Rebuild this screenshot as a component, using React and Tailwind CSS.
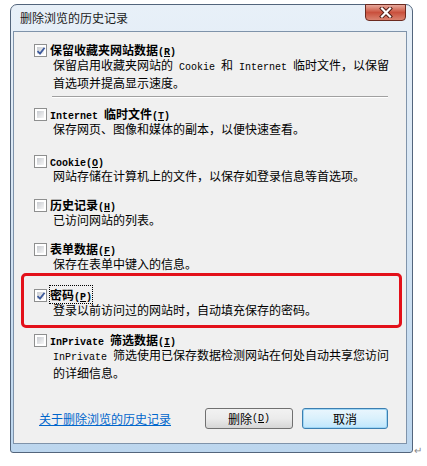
const L = ({ children }) => (
  <span className="font-['Liberation_Mono','Noto_Sans_CJK_SC',monospace] text-[10px]">{children}</span>
);

function Checkbox({ checked }) {
  return (
    <div className="relative w-[13px] h-[13px] mt-[1px] shrink-0 border border-[#8e8f8f] bg-white p-[2px]">
      <div className="w-full h-full bg-gradient-to-br from-[#c9ccd1] to-[#f6f6f6]" />
      {checked && (
        <svg className="absolute left-[1px] top-[1px]" width="10" height="10" viewBox="0 0 10 10">
          <path d="M1.5 5.2 L4 7.6 L8.6 1.8" fill="none" stroke="#3d5a9c" strokeWidth="1.8" />
        </svg>
      )}
    </div>
  );
}

function Item({ checked, title, lines, className = '', focus }) {
  return (
    <div className={`flex items-start ${className}`}>
      <Checkbox checked={checked} />
      <div className="ml-[3px] whitespace-nowrap">
        <div className="h-[14px] leading-[14px] font-bold">
          <span className={focus ? 'outline-1 outline-dotted outline-black' : ''}>{title}</span>
        </div>
        <div className={`pl-[3px] leading-[15px] ${focus ? 'mt-0' : ''}`}>
          {lines.map((ln, i) => <div key={i}>{ln}</div>)}
        </div>
      </div>
    </div>
  );
}

export default function App() {
  return (
    <div className="relative w-[427px] h-[466px] bg-white pt-[4px] pl-[10px] font-['Noto_Sans_CJK_SC',sans-serif] text-[12px] text-black">
      <div className="w-[403px] h-[449px] rounded-t-[7px] rounded-b-[3px] border border-[#53657c] bg-gradient-to-b from-[#e8f0f8] via-[#d4e4f3] to-[#bcd6ee] flex flex-col">
        {/* title bar */}
        <div className="h-[26px] flex items-start justify-between pl-[9px] pr-[6px]">
          <span className="mt-[5px] leading-[16px] text-[#1a1a1a]">删除浏览的历史记录</span>
          <div className="w-[41px] h-[17px] -mt-[1px] rounded-b-[4px] border border-[#6b2a20] bg-gradient-to-b from-[#e7a89b] via-[#c9503d] to-[#d9826f] flex items-center justify-center">
            <svg width="14" height="11" viewBox="0 0 14 11">
              <path d="M3 1.5 L11 9.5 M11 1.5 L3 9.5" stroke="#4b1a12" strokeWidth="4" strokeLinecap="square" />
              <path d="M3 1.5 L11 9.5 M11 1.5 L3 9.5" stroke="#ffffff" strokeWidth="2.2" strokeLinecap="square" />
            </svg>
          </div>
        </div>

        {/* client area */}
        <div className="relative flex-1 ml-[2px] mr-[5px] mb-[8px] border border-[#7f93aa] bg-[#f0f0f0] flex flex-col pl-[20px]">
          <Item
            className="mt-[11px]"
            checked
            title={<>保留收藏夹网站数据<L>(<u>R</u>)</L></>}
            lines={[
              <>保留启用收藏夹网站的<L> Cookie </L>和<L> Internet </L>临时文件，以保留</>,
              <>首选项并提高显示速度。</>,
            ]}
          />
          <div className="ml-[18px] mt-[6px] w-[336px] h-[2px] border-t border-[#a0a0a0] border-b border-b-white" />
          <Item
            className="mt-[9px]"
            title={<><L>Internet </L>临时文件<L>(<u>T</u>)</L></>}
            lines={[<>保存网页、图像和媒体的副本，以便快速查看。</>]}
          />
          <Item
            className="mt-[18px]"
            title={<L>Cookie(<u>O</u>)</L>}
            lines={[<>网站存储在计算机上的文件，以保存如登录信息等首选项。</>]}
          />
          <Item
            className="mt-[15px]"
            title={<>历史记录<L>(<u>H</u>)</L></>}
            lines={[<>已访问网站的列表。</>]}
          />
          <Item
            className="mt-[15px]"
            title={<>表单数据<L>(<u>F</u>)</L></>}
            lines={[<>保存在表单中键入的信息。</>]}
          />
          <Item
            className="mt-[17px]"
            checked
            focus
            title={<>密码<L>(<u>P</u>)</L></>}
            lines={[<>登录以前访问过的网站时，自动填充保存的密码。</>]}
          />
          <Item
            className="mt-[16px]"
            title={<><L>InPrivate </L>筛选数据<L>(<u>I</u>)</L></>}
            lines={[
              <><L>InPrivate </L>筛选使用已保存数据检测网站在何处自动共享您访问</>,
              <>的详细信息。</>,
            ]}
          />

          {/* bottom row */}
          <div className="mt-auto mb-[14px] -ml-[20px] pl-[25px] pr-[18px] flex items-center justify-between">
            <span className="text-[#0066cc] underline leading-[16px]">关于删除浏览的历史记录</span>
            <div className="flex gap-[9px]">
              <div className="w-[88px] h-[21px] rounded-[3px] border border-[#707070] bg-gradient-to-b from-[#f2f2f2] via-[#ebebeb] to-[#d6d6d6] flex items-center justify-center leading-[14px]">
                删除<L>(<u>D</u>)</L>
              </div>
              <div className="w-[86px] h-[21px] rounded-[3px] border border-[#3c7fb1] bg-gradient-to-b from-[#eaf6fd] via-[#d9f0fc] to-[#bee6fd] shadow-[inset_0_0_0_1px_#9fd6f5] flex items-center justify-center leading-[14px]">
                取消
              </div>
            </div>
          </div>

          {/* red highlight annotation */}
          <div className="absolute left-[7px] top-[241px] w-[381px] h-[55px] rounded-[5px] border-[3px] border-[#e3101a] pointer-events-none" />
        </div>
      </div>
      <span className="absolute left-[414px] top-[444px] text-[10px] text-[#888] leading-[12px]">↵</span>
    </div>
  );
}
